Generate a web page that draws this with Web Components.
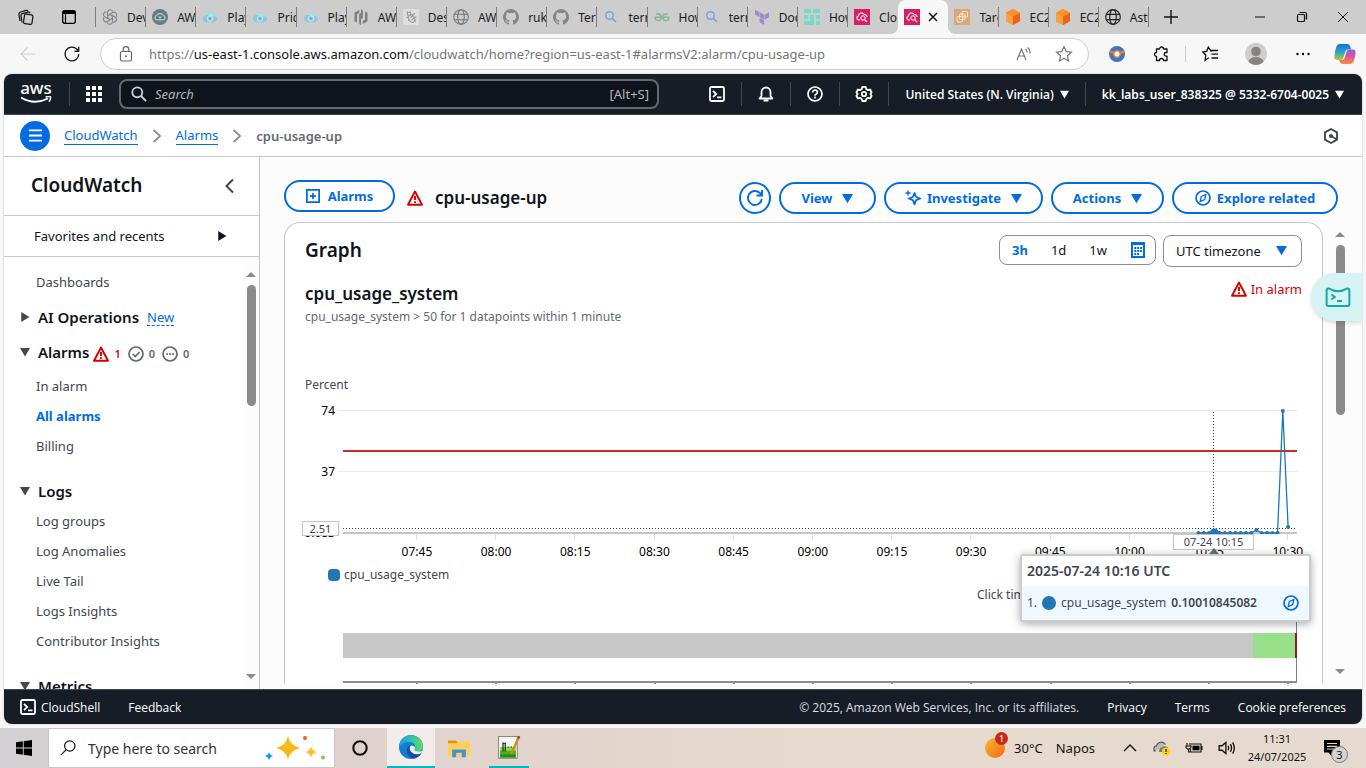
<!DOCTYPE html>
<html lang="en">
<head>
<meta charset="utf-8">
<title>cpu-usage-up | CloudWatch</title>
<style>
html,body{height:100%;margin:0}
body{font-family:"Noto Sans","Open Sans",sans-serif;font-size:13px;color:#0f141a;background:#f7f7f7;overflow:hidden}
</style>
</head>
<body>
<desktop-screen></desktop-screen>
<script>
const ICONS = {
  workspaces:'<g fill="none" stroke="#111" stroke-width="1.2"><rect x="6" y="5.500" width="8.500" height="9.500" rx="1.500" transform="rotate(8 10 10)"/><path d="M4 13.500L3 6.500q-.2-1.500 1.200-1.800l6-1.600q1.300-.3 2 .9M2 12L.9 5.200Q.8 3.700 2 3.300L8 1.400q1.200-.3 2 .7"/></g>',
  tabmenu:'<rect x="1.700" y="1.700" width="12.600" height="12.600" rx="2" fill="none" stroke="#000" stroke-width="1.300"/><path d="M1.500 4V3q0-1.500 1.500-1.500h10q1.500 0 1.500 1.500v2H1.500z"/><path d="M4.500 5v9" stroke="#000" stroke-width="1.200"/>',
  gpt:'<g fill="none" stroke="#858585" stroke-width="1.100"><path id="p" d="M8 5.400L5.500 6.800V3.500a2.700 2.700 0 0 1 5.200-1"/><use href="#p" transform="rotate(60 8 8)"/><use href="#p" transform="rotate(120 8 8)"/><use href="#p" transform="rotate(180 8 8)"/><use href="#p" transform="rotate(240 8 8)"/><use href="#p" transform="rotate(300 8 8)"/></g>',
  darkcloud:'<circle cx="8" cy="8" r="8" fill="#777"/><path d="M4.800 10.800a2.200 2.200 0 0 1 0-4.300 3.600 3.600 0 0 1 6.400 0 2.200 2.200 0 0 1 0 4.300z" fill="#6d6d6d" stroke="#7fd0df" stroke-width="1.500"/><circle cx="8" cy="8.300" r="1.400" fill="#7fd0df"/>',
  cloud:'<path d="M3.700 13.300a3.700 3.700 0 0 1-.4-7.100 5.200 5.200 0 0 1 9.400 0 3.700 3.700 0 0 1-.4 7.100z" fill="#8fc8de"/><path d="M3.300 6.200a5.200 5.200 0 0 1 9.400 0 3.700 3.700 0 0 1 3 2.600q-3-2-6-1.200Q6 5 3.300 6.200z" fill="#a6e0e4"/><circle cx="8" cy="9.500" r="2.700" fill="none" stroke="#d5eef3"/><circle cx="8" cy="9.500" r="1.200" fill="#69a9c4"/>',
  hashi:'<path d="M6.200 1L1.500 3.800v8.400L4 13.600V5.300l2.200-1.300zM6.200 4.900v10.100L8 16V9.400h1.800V6.700H8V3.900zM9.800 15l4.700-2.800V3.800L12 2.400v8.300L9.800 12zM8 .3v6.400h1.800V1.200z" fill="#7e7e7e"/>',
  bug:'<rect width="16" height="16" rx="2" fill="#dedede"/><g fill="none" stroke="#9a9a9a" stroke-width="1.100"><ellipse cx="8.500" cy="9.500" rx="2.800" ry="4" transform="rotate(-30 8.500 9.500)"/><circle cx="6" cy="5" r="1.800"/><path d="M3.500 2.500L5 3.700M7 2v1.500M3.500 8l2.500 1M9 6l3-1.500M11 8.500l2.500-.5M5 11.500l2-.5M11.500 11l1.500 1.500M7.500 8.500l3-2M8.500 11l3-2"/></g>',
  globe:'<g fill="none" stroke="#777" stroke-width="1.100"><circle cx="8" cy="8" r="7.300"/><ellipse cx="8" cy="8" rx="3.300" ry="7.300"/><path d="M1.500 5.300h13M1.500 10.700h13"/></g>',
  globeDark:'<g fill="none" stroke="#222" stroke-width="1.200"><circle cx="8" cy="8" r="7.300"/><ellipse cx="8" cy="8" rx="3.300" ry="7.300"/><path d="M1.500 5.300h13M1.500 10.700h13"/></g>',
  github:'<path fill="#858585" d="M8 0a8 8 0 0 0-2.530 15.590c.4.070.55-.17.55-.38l-.01-1.490c-2.010.37-2.530-.49-2.690-.94-.09-.23-.48-.94-.82-1.130-.28-.15-.68-.52-.01-.53.630-.01 1.080.58 1.230.82.720 1.210 1.870.87 2.330.66.070-.52.280-.87.510-1.070-1.780-.2-3.640-.89-3.640-3.950 0-.87.310-1.590.82-2.150-.08-.2-.36-1.020.08-2.120 0 0 .67-.21 2.200.82a7.600 7.600 0 0 1 4 0c1.530-1.040 2.200-.82 2.200-.82.440 1.100.16 1.920.08 2.120.510.56.82 1.270.82 2.150 0 3.070-1.870 3.750-3.650 3.950.290.250.540.730.540 1.480l-.01 2.200c0 .21.15.46.55.38A8 8 0 0 0 8 0z"/>',
  lens:'<circle cx="6.500" cy="6.500" r="3.800" fill="none" stroke="#6fa8dc" stroke-width="1.500"/><path d="M9.500 9.500L13 13" stroke="#6fa8dc" stroke-width="1.700"/>',
  geeks:'<g fill="none" stroke="#80b890" stroke-width="1.400"><path d="M2 5h2a2.800 2.800 0 0 1 0 6.500Q1.300 11.500 1 8.300h14q-.3 3.200-3 3.200A2.800 2.800 0 0 1 12 5h2"/></g>',
  terraform:'<path d="M5.600 3.300l4.500 2.500v5L5.600 8.300zM1 .7l4.200 2.400v5L1 5.600zM15 3.200v5l-4.500 2.600v-5zM5.600 8.900l4.500 2.500v4.600l-4.500-2.500z" fill="#9d8ccb"/>',
  mint:'<path d="M0 0h7v4H0zM9 0h7v4H9zM0 6h4v4H0zM6 6h4v10H6zM12 6h4v4h-4zM0 12h8v4H0zM12 12h4v4h-4z" fill="#77d9c7"/>',
  cw:'<rect width="16" height="16" fill="#d81e62"/><path d="M6 11H4.700a2.100 2.100 0 0 1-.3-4.100 3.200 3.200 0 0 1 5.900-1.400A2.500 2.500 0 0 1 13 8" fill="none" stroke="#fff" stroke-width="1.100"/><circle cx="9" cy="9" r="2.200" fill="none" stroke="#fff"/><path d="M10.700 10.700L13 13" stroke="#fff" stroke-width="1.200"/>',
  target:'<rect width="16" height="16" fill="#dca878"/><g fill="none" stroke="#f6e6d7"><rect x="3" y="7.500" width="5.500" height="5.500" rx="1"/><rect x="5.500" y="5" width="5.500" height="5.500" rx="1"/><rect x="8" y="2.500" width="5.500" height="5.500" rx="1"/></g>',
  box:'<path d="M8 0l7 3.800v8.400L8 16l-7-3.800V3.800z" fill="#f58220"/><path d="M1 3.800L8 7.500v8.500l-7-3.800z" fill="#f9a13f"/><path d="M8 0l7 3.800-7 3.700-7-3.700z" fill="#fa9126"/><path d="M15 3.800v8.400L8 16V7.500z" fill="#ee6519"/>',
  plus:'<path d="M8 1v14M1 8h14" stroke="#111" stroke-width="1.400"/>',
  close:'<path d="M4 4l8 8M12 4l-8 8" stroke="#111" stroke-width="1.500"/>',
  min:'<path d="M3 8h10" stroke="#111"/>',
  restore:'<g fill="none" stroke="#111" stroke-width="1.200"><rect x="3.500" y="5.500" width="7" height="7" rx="1"/><path d="M5.500 3.500h5.500q1.500 0 1.500 1.500v5.500"/></g>',
  winclose:'<path d="M3 3l10 10M13 3L3 13" stroke="#111"/>',
  back:'<path d="M15.500 8H1M7.500 1.500L1 8l6.500 6.500" fill="none" stroke="#cfcfcf" stroke-width="1.200"/>',
  reload:'<path d="M14.800 8A6.900 6.900 0 1 1 12.900 3.200L14.500 5M14.700.8V5.300h-4.300" fill="none" stroke="#111" stroke-width="1.300"/>',
  lock:'<g fill="none" stroke="#666" stroke-width="1.200"><rect x="2.500" y="5.500" width="11" height="9.500" rx="1.500"/><path d="M5.200 5.500V3.400a2.800 2.800 0 0 1 5.600 0v2.100"/></g><circle cx="8" cy="10.300" r="1" fill="#666"/>',
  read:'<g fill="none" stroke="#777" stroke-width="1.200"><path d="M1 14L5.500 3 10 14M2.700 10h5.700M9.500 3q1.700 1.300 1.500 3.500M11.500 1.500Q14.500 3.500 14 7.500"/></g>',
  star:'<path d="M8 .8l2.200 4.800 5.200.6-3.900 3.500 1 5.200L8 12.300l-4.500 2.600 1-5.200L.6 6.200l5.200-.6z" fill="none" stroke="#777" stroke-width="1.200"/>',
  donut:'<circle cx="8" cy="8" r="8" fill="#3b77bd"/><path d="M0 5q2.500-1 5 .5a3.800 3.800 0 0 1 6 0Q13.500 4 16 5q-.5 2.300-3.800 3A4.200 4.200 0 1 1 3.800 8Q.5 7 0 5z" fill="#e87a3b"/><circle cx="8" cy="8" r="2.500" fill="#fff"/>',
  puzzle:'<path d="M3.500 3h3a2 2 0 0 1 4 0h3.500v3.500H13a1.800 1.800 0 0 0 0 3.600h1V14.500H10.500a2 2 0 0 0-4 0h-3v-4a2 2 0 0 1 0-4z" fill="none" stroke="#111" stroke-width="1.300" stroke-linejoin="round"/>',
  favs:'<path d="M9.500 5.700L6.300 1.200 4.700 5.300.8 6l3 3-.7 5.300 3.700-2.500M9 4.500h7M9.500 8.200H16M9.500 12H16" fill="none" stroke="#111" stroke-width="1.300"/>',
  user:'<circle cx="8" cy="8" r="8" fill="#d0cecc"/><circle cx="8" cy="6.200" r="3.500" fill="#868381"/><path d="M2.500 13.500a5.700 4.500 0 0 1 11 0A8 8 0 0 1 8 16a8 8 0 0 1-5.500-2.500z" fill="#868381"/>',
  dots:'<circle cx="2.500" cy="8" r="1.200"/><circle cx="8" cy="8" r="1.200"/><circle cx="13.500" cy="8" r="1.200"/>',
  copilot:'<defs><linearGradient id="a" x2="0" y2="1"><stop stop-color="#1a6fd6"/><stop offset=".5" stop-color="#2aa6c9"/><stop offset="1" stop-color="#b4c92f"/></linearGradient><linearGradient id="b" x2="0" y2="1"><stop stop-color="#8a5cf0"/><stop offset=".5" stop-color="#e0559a"/><stop offset="1" stop-color="#fb8a3c"/></linearGradient></defs><path d="M4 .8h6q1.300 0 1.800 1.700l.7 2.200H10q-1.200 0-1.600 1.300L6.700 11q-.4 1.300-1.600 1.300H2.400Q0 12.300.3 9.500q.3-3.500 1.400-6.700Q2.400.8 4 .8z" fill="url(#a)"/><path d="M12 15.200H6q-1.300 0-1.800-1.700l-.6-1.200H6q1.200 0 1.600-1.300l1.700-5Q9.700 4.700 11 4.700h2.600q2.400 0 2.100 2.800-.3 3.200-1.400 5.700-.8 2-2.300 2z" fill="url(#b)"/>',
  grid:'<path d="M0 0h4v4H0zM6 0h4v4H6zM12 0h4v4h-4zM0 6h4v4H0zM6 6h4v4H6zM12 6h4v4h-4zM0 12h4v4H0zM6 12h4v4H6zM12 12h4v4h-4z" fill="#fff"/>',
  search:'<circle cx="6.300" cy="6.300" r="5" fill="none" stroke="currentColor" stroke-width="1.800"/><path d="M10 10l5 5" stroke="currentColor" stroke-width="1.800"/>',
  shell:'<g fill="none" stroke="currentColor" stroke-width="1.800"><rect x="1" y="1" width="14" height="14" rx="1.500"/><path d="M4 4.800L7.200 8 4 11.200M8 11.300h4.500"/></g>',
  bell:'<g fill="none" stroke="#fff" stroke-width="1.800" stroke-linejoin="round"><path d="M3.500 10V6a4.500 4.500 0 0 1 9 0v4l2 2.500H1.500z"/><path d="M5.500 14.500h5"/></g>',
  help:'<g fill="none" stroke="#fff" stroke-width="1.700"><circle cx="8" cy="8" r="7"/><path d="M5.600 6.500q0-2.300 2.400-2.300t2.400 2.100q0 1.200-1.200 1.700Q8 8.500 8 9.800"/></g><rect x="7.100" y="10.600" width="1.800" height="1.800" fill="#fff"/>',
  gear:'<g fill="none" stroke="#fff" stroke-width="1.800"><path d="M6.300 1h3.400l.5 2 1.900 1.100 2-.6 1.500 2.700L14.300 8l1.300 1.800-1.500 2.700-2-.6-1.900 1.100-.5 2H6.300l-.5-2-1.900-1.100-2 .6L.4 9.800 1.700 8 .4 6.200l1.500-2.700 2 .6L5.800 3z" stroke-linejoin="round"/><circle cx="8" cy="8" r="2.200"/></g>',
  down:'<path d="M0 1.500h16L8 15z" fill="currentColor"/>',
  right:'<path d="M2 0v16L15 8z" fill="currentColor"/>',
  chev:'<path d="M4 1l7.500 7L4 15" fill="none" stroke="#8c8c94" stroke-width="2"/>',
  chevl:'<path d="M12 1.500L5.500 8l6.500 6.500" fill="none" stroke="#424650" stroke-width="2"/>',
  menu:'<path d="M1 2.500h14M1 8h14M1 13.500h14" stroke="#fff" stroke-width="2"/>',
  hexq:'<path d="M8 1l6 3.400v7.200L8 15l-6-3.400V4.400z" fill="none" stroke="#424650" stroke-width="1.900"/><circle cx="8" cy="8" r="2" fill="#424650"/><path d="M8 8l6 3.500" stroke="#424650" stroke-width="1.500"/>',
  addbox:'<path d="M1 1h14v14H1zM8 4.500v7M4.500 8h7" fill="none" stroke="currentColor" stroke-width="2"/>',
  warn:'<path d="M8 1.500L15 14.800H1z" fill="none" stroke="#d60000" stroke-width="1.900" stroke-linejoin="round"/><path d="M8 6v4M8 11.200v1.800" stroke="#d60000" stroke-width="1.900"/>',
  ok:'<g fill="none" stroke="#656871" stroke-width="1.700"><circle cx="8" cy="8" r="7"/><path d="M4.800 8l2.500 2.500L11.500 6"/></g>',
  pend:'<circle cx="8" cy="8" r="7" fill="none" stroke="#656871" stroke-width="1.700"/><path d="M4.200 7.200h1.700v1.700H4.200zM7.200 7.200h1.700v1.700H7.200zM10.200 7.200h1.700v1.700h-1.700z" fill="#656871"/>',
  refresh:'<path d="M14.800 9A7 7 0 1 1 12.600 2.800L15 5M15 0v5.500H9.500" fill="none" stroke="#006ce0" stroke-width="1.900"/>',
  spark:'<path d="M9.500 3l1.600 4 4.200 1.500-4.200 1.700-1.600 4.100-1.600-4.100-4.200-1.700L7.900 7z" fill="none" stroke="currentColor" stroke-width="1.800" stroke-linejoin="round"/><path d="M3 .5v5M.5 3h5" stroke="currentColor" stroke-width="1.400"/>',
  compass:'<circle cx="8" cy="8" r="7" fill="none" stroke="currentColor" stroke-width="1.700"/><path d="M10.800 4.500L9.700 9.600l-4.500 2 1.100-5.100z" fill="none" stroke="currentColor" stroke-width="1.300"/>',
  cal:'<path d="M1 0h14v16H1zM3 3v11h10V3z" fill="#006ce0" fill-rule="evenodd"/><path d="M4.300 5h2v2h-2zM7.200 5h2v2h-2zM10.100 5h2v2h-2zM4.300 8h2v2h-2zM7.200 8h2v2h-2zM10.100 8h2v2h-2zM4.300 11h2v2h-2zM7.200 11h2v2h-2z" fill="#006ce0"/>',
  aterm:'<path d="M1 12.500V4q0-1.400 1.500-1.200Q8 6 13.500 2.800 15 2.600 15 4v8.500q0 1-1 1H2q-1 0-1-1zM4 6.500L6 8 4 9.500M7.500 10.500h3" fill="none" stroke="#12a8a4" stroke-width="1.200"/>',
  win:'<path d="M0 2.300l6.800-1V7.600H0zM7.700 1.200L16 0v7.600H7.700zM0 8.500h6.800v6.200L0 13.800zM7.700 8.500H16V16l-8.300-1.200z"/>',
  tsearch:'<circle cx="9.800" cy="6" r="5.200" fill="none" stroke="#111" stroke-width="1.200"/><path d="M6 9.800L.8 15.200" stroke="#111" stroke-width="1.200"/>',
  cortana:'<circle cx="8" cy="8" r="6.700" fill="none" stroke="#111" stroke-width="2.100"/>',
  edge:'<defs><linearGradient id="e"><stop stop-color="#1fa0dc"/><stop offset=".6" stop-color="#39c6a0"/><stop offset="1" stop-color="#62dd55"/></linearGradient></defs><circle cx="8" cy="8" r="8" fill="#0f7fd4"/><path d="M.3 6.200A8 8 0 0 1 16 7.500q0 3.300-3.300 3.300-2.600 0-2.400-1.300.9-1.200.2-2.700Q9.500 4.700 6.500 4.700 2.500 4.700.3 8z" fill="url(#e)"/><path d="M7 7.200q-2.500 1.700-1.600 5 1.200 3.600 5 3.400 3-.8 4.500-3.600-2 1-4.300.7Q7.500 12 7 9.500z" fill="#124f9d"/><path d="M8 7q-1.600 1.800-.1 4 2.300 2.600 6.500 1.400l1.300-1.900q-1 .5-3 .4-2.600 0-2.400-1.400.3-.5.4-1.300Q9.700 7 8 7z" fill="#f2eceb"/>',
  folder:'<path d="M0 2.500h5.500L7 4h8.500v4H0z" fill="#d99708"/><path d="M0 4.500h6L7.500 3.300H16V14H0z" fill="#ffd05a"/><path d="M3 14.700V9h10v5.700h-3v-3.200H6v3.200z" fill="#3c94dc"/>',
  notes:'<rect x="1" y="1" width="12.500" height="14.500" fill="#f4f6f4" stroke="#888" stroke-width=".7"/><path d="M2 8h10.500v7H2z" fill="#8fdc3a"/><path d="M2 10.500h10.500V15H2z" fill="#4bb21f"/><path d="M2 13h10.500v2H2z" fill="#2b8c1d"/><path d="M4 5v6M4 5.500h1.500V11M7 8h1M9 8h1" fill="none" stroke="#222" stroke-width=".8"/><path d="M14.500 1.500L9.500 12.500" stroke="#cf8a1c" stroke-width="1.500"/><path d="M14.800.8l-.6 1.400" stroke="#a33" stroke-width="1.600"/>',
  sun:'<defs><linearGradient id="g" x2="1" y2="1"><stop stop-color="#f7b733"/><stop offset="1" stop-color="#f4680f"/></linearGradient></defs><circle cx="8" cy="8" r="8" fill="url(#g)"/>',
  up:'<path d="M2 11l6-6 6 6" fill="none" stroke="#111" stroke-width="1.400"/>',
  onedrive:'<path d="M1.500 11.500a3 3 0 0 1 1-5.700 5 5 0 0 1 9-1.300" fill="#bbb" stroke="#555" stroke-width="1.200"/><path d="M5 12q-.5-4 4-5.500 3-1 5 1v4.500z" fill="#777"/><circle cx="12" cy="11.500" r="4" fill="#ffd500"/><path d="M12 9v3M12 13v1" stroke="#111" stroke-width="1.200"/>',
  battery:'<path d="M5 4h10v8H4.500V9M15 6.500h1v3h-1M1 3v3M4 3v3M0 6h5v1.500L3.500 9h-2L0 7.500zM2.500 9v3h2" fill="none" stroke="#111" stroke-width="1.100"/><path d="M6.500 5.700h7v4.600h-7z"/>',
  sound:'<path d="M1 6h2.500L7 3v10L3.500 10H1zM9 6q1 2 0 4M11 4.500q2 3.500 0 7M13 3q3 5 0 10" fill="none" stroke="#111" stroke-width="1.200"/>',
  notif:'<path d="M0 0h16v12.500h-8.500V16L4.500 12.500H0z"/><path d="M3 3.500h10M3 6.300h10M3 9h7" stroke="#e6d9ce" stroke-width="1.200"/>',
  sparkles:'<path d="M23 1q1.500 9.500 12 12-10.500 2.500-12 12-1.500-9.500-12-12Q21.500 10.500 23 1z" fill="#fbb917"/><path d="M46 11q.8 5 6 6-5.200 1-6 6-.8-5-6-6 5.200-1 6-6z" fill="#fcc021"/><path d="M4 17q.8 3.500 4.500 4-3.700.7-4.500 4.300Q3.200 21.700-.5 21q3.700-.5 4.500-4z" fill="#0f9cf0"/><circle cx="40" cy="3" r="2" fill="#ef5a28"/><circle cx="58" cy="22.500" r="2" fill="#8cc63f"/>'
};

/* Registers one element: styles and markup are cloned into its open shadow root. */
function define(name, css, html, setup){
  const t = document.createElement('template');
  t.innerHTML = `<style>*{box-sizing:border-box}button,input,select{font:inherit;color:inherit}button{cursor:pointer}a{color:inherit;text-decoration:none}${css}</style>${html}`;
  customElements.define(name, class extends HTMLElement{
    constructor(){ super(); this.attachShadow({mode:'open'}); }
    connectedCallback(){
      if (this.shadowRoot.childNodes.length) return;
      this.shadowRoot.append(t.content.cloneNode(true));
      if (setup) setup(this, this.shadowRoot);
    }
  });
}

define('ui-icon', ':host{display:inline-block;width:16px;height:16px;flex:none}svg{display:block;width:100%;height:100%;overflow:visible}', '',
  (el, root) => {
    const holder = document.createElement('template');
    holder.innerHTML = `<svg viewBox="0 0 ${el.getAttribute('box') || '16 16'}" aria-hidden="true">${ICONS[el.getAttribute('name')]}</svg>`;
    root.append(holder.content);
  });

/* ---------- browser chrome ---------- */
const TABS = [['gpt','Dev'],['darkcloud','AWS'],['cloud','Play'],['cloud','Prici'],['cloud','Play'],['hashi','AWS'],['bug','Desi'],['globe','AWS'],['github','ruk'],['github','Terra'],['lens','terra'],['geeks','How'],['lens','terra'],['terraform','Docs'],['mint','How'],['cw','Clou'],['cw',''],['target','Targ'],['box','EC2'],['box','EC2'],['globeDark','Astr']];

define('tab-strip', `
:host{display:flex;align-items:center;height:34px;background:#cdcdcd;flex:none}
.lead{display:flex;align-items:center;width:96px;height:20px;padding-left:18px;gap:27px;border-right:1px solid #7c7c7c;flex:none}
.tabs{display:flex;flex:1;min-width:0}
.win{display:flex;width:217px;flex:none;align-items:center;justify-content:space-between;padding:0 15px 0 14px}
button{background:none;border:0;padding:0;display:flex}
.plus{margin-right:48px}`,
`<div class="lead"><button aria-label="Workspaces"><ui-icon name="workspaces"></ui-icon></button><button aria-label="Tab actions"><ui-icon name="tabmenu"></ui-icon></button></div>
<div class="tabs" role="tablist"></div>
<div class="win"><button class="plus" aria-label="New tab"><ui-icon name="plus"></ui-icon></button><button aria-label="Minimise"><ui-icon name="min"></ui-icon></button><button aria-label="Restore"><ui-icon name="restore"></ui-icon></button><button aria-label="Close"><ui-icon name="winclose"></ui-icon></button></div>`,
(el, root) => {
  root.querySelector('.tabs').innerHTML = TABS.map(([icon, label], i) =>
    `<page-tab icon="${icon}"${i===16?' active':''}${i===15?' last-before':''}>${label}</page-tab>`).join('');
});

define('page-tab', `
:host{display:flex;align-items:center;flex:1 1 0;min-width:0;height:34px;position:relative;font-size:12px;color:#1b1b1b}
button{display:flex;align-items:center;gap:9px;width:100%;padding:0 0 0 6px;height:20px;background:none;border:0;border-right:1px solid #7c7c7c;overflow:hidden;white-space:nowrap}
span{overflow:hidden;flex:1;text-align:left}
:host([active]) button{gap:5px}
:host([last-before]) button,:host([active]) button{border-color:transparent}
:host([active]){background:#f7f7f7;border-radius:8px 8px 0 0}
:host([active])::before,:host([active])::after{content:"";position:absolute;bottom:0;width:8px;height:8px}
:host([active])::before{right:100%;background:radial-gradient(circle at 0 0,transparent 8px,#f7f7f7 8px)}
:host([active])::after{left:100%;background:radial-gradient(circle at 100% 0,transparent 8px,#f7f7f7 8px)}`,
`<button role="tab"></button>`,
(el, root) => {
  root.querySelector('button').innerHTML = `<ui-icon name="${el.getAttribute('icon')}"></ui-icon>` +
    (el.hasAttribute('active') ? '<ui-icon name="close" aria-label="Close tab"></ui-icon>' : '<span><slot></slot></span>');
});

define('address-bar', `
:host{display:flex;align-items:center;height:40px;background:#f7f7f7;padding:0 10px 0 20px;flex:none}
button{background:none;border:0;padding:0;display:flex}
.reload{margin:0 20px 0 28px}
.field{display:flex;align-items:center;flex:1;min-width:0;height:32px;border:1px solid #cfcfcf;border-radius:16px;background:#fff;padding:0 16px 0 17px}
.url{flex:1;min-width:0;margin-left:15px;font-size:13px;color:#767676;white-space:nowrap;overflow:hidden;outline:0}
.url b{font-weight:400;color:#111}
.read{margin-right:24px}
.ext{display:flex;align-items:center;margin-left:20px;gap:28px}
.fav{border-left:1px solid #cfcfcf;padding-left:16px;margin-left:-12px}
.big{width:22px;height:22px}
.fav+button{margin-left:-1px}
.cop{margin-left:-5px}`,
`<button aria-label="Back"><ui-icon name="back"></ui-icon></button>
<button class="reload" aria-label="Refresh"><ui-icon name="reload"></ui-icon></button>
<div class="field"><ui-icon name="lock"></ui-icon>
<div class="url" role="textbox" contenteditable="true" aria-label="Address" spellcheck="false">https://<b>us-east-1.console.aws.amazon.com</b>/cloudwatch/home?region=us-east-1#alarmsV2:alarm/cpu-usage-up</div>
<button class="read" aria-label="Read aloud"><ui-icon name="read"></ui-icon></button><button aria-label="Favourite"><ui-icon name="star"></ui-icon></button></div>
<div class="ext"><button aria-label="Extension"><ui-icon name="donut"></ui-icon></button><button aria-label="Extensions"><ui-icon name="puzzle"></ui-icon></button><button class="fav" aria-label="Favourites"><ui-icon name="favs"></ui-icon></button><button aria-label="Profile"><ui-icon class="big" name="user"></ui-icon></button><button aria-label="More"><ui-icon name="dots"></ui-icon></button><button class="cop" aria-label="Copilot"><ui-icon class="big" name="copilot"></ui-icon></button></div>`);

/* ---------- AWS console ---------- */
define('aws-header', `
:host{display:flex;align-items:center;height:41px;background:#161d26;border-bottom:1px solid #424650;color:#fff;flex:none;padding:0 18px 0 16px;font-size:12px;font-weight:600}
button{background:none;border:0;padding:0;display:flex;align-items:center;gap:6px;white-space:nowrap}
.logo{display:flex;flex-direction:column;align-items:center;width:32px;font-size:17px;line-height:12px;font-weight:500;margin-top:-3px}
.logo svg{width:32px;height:8px;margin-top:2px}
.sep{width:1px;height:24px;background:#424650;flex:none}
.logo+.sep{margin-left:17px}
.apps{margin:0 17px 0 16px}
label{display:flex;align-items:center;flex:0 1 540px;height:30px;border:2px solid #656871;border-radius:8px;background:#0f141a;padding:0 8px 0 10px;color:#b4b4bb;font-weight:400;font-size:13px;min-width:0}
label ui-icon{color:#d0d0d8}
input{flex:1;min-width:0;background:none;border:0;outline:0;padding:0;margin-left:8px;font-style:italic}
input::placeholder{color:#b4b4bb}
.tools{display:flex;align-items:center;gap:16px;margin-left:auto}
.tri{width:9px;height:9px}
.region{font-family:"Open Sans","Noto Sans",sans-serif}`,
`<a class="logo" href="#" aria-label="AWS home">aws<svg viewBox="0 0 32 8"><path d="M1 1.500Q14 9.500 28 2.500" fill="none" stroke="#fff" stroke-width="1.800"/><path d="M25.500 1q3-1 5-.3.3 2.500-1.500 5" fill="none" stroke="#fff" stroke-width="1.500"/></svg></a>
<span class="sep"></span>
<button class="apps" aria-label="Services"><ui-icon name="grid"></ui-icon></button>
<label><ui-icon name="search"></ui-icon><input type="search" placeholder="Search" aria-label="Search"><span>[Alt+S]</span></label>
<div class="tools"><button aria-label="CloudShell"><ui-icon name="shell"></ui-icon></button><span class="sep"></span><button aria-label="Notifications"><ui-icon name="bell"></ui-icon></button><span class="sep"></span><button aria-label="Help"><ui-icon name="help"></ui-icon></button><span class="sep"></span><button aria-label="Settings"><ui-icon name="gear"></ui-icon></button><span class="sep"></span><button class="region">United States (N. Virginia)<ui-icon class="tri" name="down"></ui-icon></button><span class="sep"></span><button>kk_labs_user_838325 @ 5332-6704-0025<ui-icon class="tri" name="down"></ui-icon></button></div>`);

define('bread-crumbs', `
:host{display:flex;align-items:center;height:42px;background:#fff;border-bottom:1px solid #c6c6cd;padding:0 23px 0 16px;flex:none;font-size:13px}
.menu{width:30px;height:30px;border-radius:50%;border:0;background:#006ce0;padding:0;display:grid;place-items:center;margin-right:14px}
.menu ui-icon{width:15px;height:15px}
a{color:#006ce0;border-bottom:1px solid #006ce0;line-height:18px}
nav{display:flex;align-items:center;gap:12px;flex:1}
nav ui-icon{width:14px;height:14px}
b{font-weight:600;color:#656871}
.tip{background:none;border:0;padding:0;display:flex}`,
`<button class="menu" aria-label="Toggle navigation"><ui-icon name="menu"></ui-icon></button>
<nav aria-label="Breadcrumbs"><a href="#">CloudWatch</a><ui-icon name="chev"></ui-icon><a href="#">Alarms</a><ui-icon name="chev"></ui-icon><b>cpu-usage-up</b></nav>
<button class="tip" aria-label="Tips"><ui-icon name="hexq"></ui-icon></button>`);

define('scroll-rail', `
:host{display:flex;flex-direction:column;align-items:center;width:16px;flex:none;padding:6px 0}
i{width:0;height:0;border:5px solid transparent;border-top:0;border-bottom:5px solid #8b8b8b}
i.dn{border-bottom:0;border-top:5px solid #8b8b8b;margin-top:auto}
span{width:9px;border-radius:5px;background:#8b8b8b;margin-top:8px;height:var(--thumb,28%)}`,
`<i></i><span></span><i class="dn"></i>`);

define('nav-item', `:host{display:block}a{display:block;line-height:30px;color:#424650;padding-left:32px}:host([current]) a{color:#006ce0;font-weight:700}`, `<a href="#"><slot></slot></a>`);
define('nav-section', `
:host{display:block;margin-top:15px}
:host([tight]){margin-top:5px}
h3{margin:0;display:flex;align-items:center;height:30px;font-size:15px;font-weight:600;gap:8px;padding-left:16px;white-space:nowrap}
:host([tight]:not([closed])) h3{margin-bottom:4px}
button{background:none;border:0;padding:0;display:flex;color:#424650}
button ui-icon{width:10px;height:10px}
h3 div{display:flex;align-items:center;gap:4px}`,
`<h3><button aria-label="Toggle section"></button><div><slot name="title"></slot></div></h3><slot></slot>`,
(el, root) => { root.querySelector('button').innerHTML = `<ui-icon name="${el.hasAttribute('closed')?'right':'down'}"></ui-icon>`; });

define('side-nav', `
:host{display:flex;flex-direction:column;width:256px;flex:none;background:#fff;border-right:1px solid #c6c6cd;min-height:0}
h2{margin:0;display:flex;align-items:center;justify-content:space-between;height:59px;border-bottom:1px solid #c6c6cd;padding:0 22px 2px 27px;font-size:19px;font-weight:600;flex:none}
h2 button,.fav{background:none;border:0}
h2 button{padding:2px 0 0;display:flex}
.fav{display:flex;align-items:center;justify-content:space-between;height:41px;border-bottom:1px solid #c6c6cd;padding:0 32px 0 30px;color:#0f141a;flex:none}
.fav ui-icon{width:10px;height:10px}
.body{display:flex;flex:1;min-height:0}
.list{flex:1;min-width:0;overflow:hidden;padding-top:10px}
.new{font-size:13px;font-weight:400;color:#006ce0;border-bottom:1px dashed #006ce0;line-height:16px;margin-left:4px}
.cnt{display:flex;align-items:center;gap:5px;font-size:11px;font-weight:600;color:#656871;margin-right:3px;padding-top:3px}
.cnt.red{color:#d60000}
scroll-rail{background:#fcfcfc;padding:15px 0 10px}`,
`<h2>CloudWatch<button aria-label="Close navigation"><ui-icon name="chevl"></ui-icon></button></h2>
<button class="fav">Favorites and recents<ui-icon name="right"></ui-icon></button>
<div class="body"><nav class="list">
<nav-item>Dashboards</nav-item>
<nav-section tight closed><span slot="title">AI Operations</span><a slot="title" class="new" href="#">New</a></nav-section>
<nav-section tight><span slot="title">Alarms</span><span slot="title" class="cnt red"><ui-icon name="warn"></ui-icon>1</span><span slot="title" class="cnt"><ui-icon name="ok"></ui-icon>0</span><span slot="title" class="cnt"><ui-icon name="pend"></ui-icon>0</span>
<nav-item>In alarm</nav-item><nav-item current>All alarms</nav-item><nav-item>Billing</nav-item></nav-section>
<nav-section><span slot="title">Logs</span><nav-item>Log groups</nav-item><nav-item>Log Anomalies</nav-item><nav-item>Live Tail</nav-item><nav-item>Logs Insights</nav-item><nav-item>Contributor Insights</nav-item></nav-section>
<nav-section><span slot="title">Metrics</span></nav-section>
</nav><scroll-rail style="--thumb:121px"></scroll-rail></div>`);

define('pill-button', `
:host{display:inline-flex;flex:none}
button{display:flex;align-items:center;justify-content:center;gap:6px;height:32px;padding:0 12px;border:2px solid #006ce0;border-radius:16px;background:#fff;color:#006ce0;font-weight:700;font-size:13px;white-space:nowrap;min-width:var(--w,32px)}
:host([round]) button{width:32px;padding:0}`,
`<button><slot></slot></button>`);

define('metric-chart', `
:host{display:grid;grid-template-columns:38px minmax(0,1fr);padding-right:5px;margin-top:52px;font-size:12px;line-height:16px}
.unit{grid-column:1/-1;color:#424650;margin-bottom:10px}
.y{display:flex;flex-direction:column;justify-content:space-between;text-align:right;padding-right:8px;height:138px;color:#000}
.y span{white-space:nowrap;align-self:flex-end}
.plot{position:relative;height:138px}
svg{display:block;width:100%;height:100%;overflow:visible}
.x{grid-column:2;display:grid;grid-template-columns:3.600% repeat(12,8.300%);margin-top:3px;text-align:center;color:#000}
.x span:first-child{grid-column:2}
.legend{grid-column:1/-1;display:flex;align-items:center;gap:4px;padding-left:23px;margin-top:7px;color:#424650}
.legend i{width:12px;height:12px;border-radius:4px;background:#1f77b4}
.hint{grid-column:1/-1;justify-self:end;width:320px;white-space:nowrap;color:#424650;margin-top:4px}
.time{grid-column:2;height:63px;margin-top:18px}
.mark{position:absolute;background:#fff;border:1px solid #c6c6c6;color:#424650;text-align:center;line-height:14px;font-size:11px}
.ym{left:-41px;top:118px;width:37px;height:15px}
.xm{left:87%;top:131px;width:81px;height:16px}
.tip{position:absolute;top:151px;right:-14px;width:291px;background:#fff;border:2px solid #ccc;border-radius:3px;box-shadow:0 2px 8px #0005;color:#424650}
.tip::before{content:"";position:absolute;left:187px;top:-8px;border:5px solid transparent;border-top:0;border-bottom:6px solid #666}
.tip h4{margin:0;padding:0 5px;line-height:30px;font-size:14px;font-weight:600}
.tip p{margin:0;padding:0 10px 0 5px;display:flex;align-items:center;height:34px;gap:5px;background:#f0f8ff}
.tip p i{width:14px;height:14px;border-radius:50%;background:#1f77b4}
.tip p b{font-weight:600}
.tip a{margin-left:auto;color:#006ce0;display:flex}`,
`<div class="unit">Percent</div>
<div class="y"><span>74</span><span>37</span><span>0.083</span></div>
<div class="plot"><svg viewBox="0 0 954 138" preserveAspectRatio="none"></svg>
<span class="mark ym">2.51</span><span class="mark xm">07-24 10:15</span>
<div class="tip" role="tooltip"><h4>2025-07-24 10:16 UTC</h4><p><span>1.</span><i></i><span>cpu_usage_system</span><b>0.10010845082</b><a href="#" aria-label="Explore"><ui-icon name="compass"></ui-icon></a></p></div></div>
<div class="x"></div>
<div class="legend"><i></i>cpu_usage_system</div>
<div class="hint">Click timeline to see the state at that time.</div>
<div class="time"><svg viewBox="0 0 954 63" preserveAspectRatio="none"></svg></div>`,
(el, root) => {
  const ticks = Array.from({length:12}, (_, i) => 74 + Math.round(i * 79.2));
  root.querySelector('.x').innerHTML = ticks.map((_, i) => {
    const m = 465 + i * 15;
    return `<span>${String(Math.floor(m / 60)).padStart(2, '0')}:${String(m % 60).padStart(2, '0')}</span>`;
  }).join('');
  const pts = Array.from({length:18}, (_, i) => [855.5 + i * 5.27, i === 16 ? 8 : i === 17 ? 124 : i === 11 ? 127 : 130]);
  root.querySelector('.plot svg').innerHTML =
    `<g fill="none"><path d="M-5 7.500H954M-5 68.500H954M-5 130H0" stroke="#e9ebed"/><path d="${ticks.map(x => `M${x - .5} 131v6`).join('')}" stroke="#ddd"/>
     <path d="M0 130H954" stroke="#c6c6c6" stroke-width="2"/><path d="M0 48H954" stroke="#d62728" stroke-width="2"/>
     <path d="M0 125.500H954M870.500 9V130" stroke="#444" stroke-dasharray="1 2"/></g>
     <clipPath id="c"><path d="M0 0H954V131H0z"/></clipPath>
     <g clip-path="url(#c)" fill="#1f77b4"><path d="M${pts.map(p => p.join(' ')).join('L')}" fill="none" stroke="#1f77b4" stroke-width="1.300"/>
     ${pts.map(([x, y], i) => `<circle cx="${x}" cy="${y}" r="${i === 3 ? 4.5 : 2}"/>`).join('')}</g>`;
  root.querySelector('.time svg').innerHTML =
    `<path d="M0 12H910V37H0z" fill="#c7c7c7"/><path d="M910 12H952V37H910z" fill="#98df8a"/>
     <path d="M953.500 0V61" stroke="#7c7c86"/><path d="M952 12h2V37h-2z" fill="#8c1d24"/><path d="M0 61H954" stroke="#8c8c94" stroke-width="2"/>
     <path d="${ticks.map(x => `M${x} 62v1`).join('')}" stroke="#8c8c94" stroke-width="2"/>`;
});

define('alarm-card', `
:host{display:block;flex:1;min-width:0;background:#fff;border:1px solid #c6c6cd;border-bottom:0;border-radius:16px 16px 0 0;padding:12px 20px 0;overflow:hidden}
.top{display:flex;align-items:center;height:32px;gap:7px}
h2{margin:0;font-size:19px;font-weight:600;flex:1;line-height:30px;align-self:start}
.seg{display:flex;align-items:center;height:30px;border:1px solid #8c8c94;border-radius:8px;padding:0 9px 0 12px;gap:23px;margin-bottom:2px}
.seg button{background:none;border:0;padding:0;display:flex}
.seg .on{color:#006ce0;font-weight:700}
.tz{position:relative;display:flex;color:#006ce0}
.tz ui-icon{position:absolute;right:15px;top:10px;width:11px;height:11px;pointer-events:none}
select{appearance:none;width:139px;height:32px;border:1px solid #8c8c94;border-radius:8px;background:#fff;padding:0 12px;color:#0f141a}
.info{display:flex;justify-content:space-between}
h3{margin:17px 0 5px;font-size:17px;line-height:20px;font-weight:600}
p{margin:0;font-size:12px;line-height:16px;color:#656871}
.state{display:flex;align-items:center;gap:4px;height:20px;margin-top:12px;color:#d60000}`,
`<div class="top"><h2>Graph</h2><div class="seg" role="group" aria-label="Time range"><button class="on">3h</button><button>1d</button><button>1w</button><button aria-label="Custom range"><ui-icon name="cal"></ui-icon></button></div>
<div class="tz"><select aria-label="Timezone"><option>UTC timezone</option></select><ui-icon name="down"></ui-icon></div></div>
<div class="info"><div><h3>cpu_usage_system</h3><p>cpu_usage_system &gt; 50 for 1 datapoints within 1 minute</p></div><div class="state"><ui-icon name="warn"></ui-icon>In alarm</div></div>
<metric-chart></metric-chart>`);

define('alarm-page', `
:host{display:flex;flex-direction:column;flex:1;min-width:0;min-height:0;background:#fcfcfd;position:relative;padding:23px 0 5px}
.bar{display:flex;align-items:center;justify-content:space-between;height:36px;padding:0 24px;margin-bottom:6px;flex:none}
.left,.right{display:flex;align-items:center}
.left{padding-bottom:4px}
.right{gap:8px}
.add{width:14px;height:14px;margin-right:2px}
.left ui-icon.w{margin:4px 12px 0 12px}
h1{margin:4px 0 0;font-size:17px;line-height:24px;font-weight:600}
.tri{width:11px;height:11px;margin-left:4px}
.view{display:flex;flex:1;min-height:0;padding:0 14px 0 24px;gap:9px}
.term{position:absolute;right:0;top:116px;width:51px;height:48px;border:0;border-radius:24px 0 0 24px;background:#d5f3f2;padding:0 0 0 2px;display:grid;place-items:center;box-shadow:0 2px 4px #0002}
.term ui-icon{width:26px;height:26px}
scroll-rail{padding:10px 0}`,
`<div class="bar"><div class="left"><pill-button style="--w:111px"><ui-icon class="add" name="addbox"></ui-icon>Alarms</pill-button><ui-icon class="w" name="warn"></ui-icon><h1>cpu-usage-up</h1></div>
<div class="right"><pill-button round><ui-icon name="refresh"></ui-icon></pill-button><pill-button style="--w:97px">View<ui-icon class="tri" name="down"></ui-icon></pill-button><pill-button style="--w:159px"><ui-icon name="spark"></ui-icon>Investigate<ui-icon class="tri" name="down"></ui-icon></pill-button><pill-button style="--w:113px">Actions<ui-icon class="tri" name="down"></ui-icon></pill-button><pill-button style="--w:166px"><ui-icon name="compass"></ui-icon>Explore related</pill-button></div></div>
<div class="view"><alarm-card></alarm-card><scroll-rail style="--thumb:170px"></scroll-rail></div>
<button class="term" aria-label="Open terminal"><ui-icon name="aterm"></ui-icon></button>`);

define('aws-footer', `
:host{display:flex;align-items:center;height:35px;flex:none;background:#161d26;border-top:1px solid #424650;color:#fff;font-family:"Open Sans","Noto Sans",sans-serif;font-size:12px;padding:0 16px;gap:28px;font-weight:500}
button{background:none;border:0;padding:0;display:flex;align-items:center;gap:5px}
.copy{margin-left:auto;color:#dedee3;font-weight:400}`,
`<button><ui-icon name="shell"></ui-icon>CloudShell</button><a href="#">Feedback</a><span class="copy">© 2025, Amazon Web Services, Inc. or its affiliates.</span><a href="#">Privacy</a><a href="#">Terms</a><a href="#">Cookie preferences</a>`);

define('aws-console', `
:host{display:flex;flex-direction:column;flex:1;min-height:0;margin:0 4px 4px;border-radius:8px;overflow:hidden;box-shadow:0 0 2px #0004}
.main{display:flex;flex:1;min-height:0}`,
`<aws-header></aws-header><bread-crumbs></bread-crumbs><div class="main"><side-nav></side-nav><alarm-page></alarm-page></div><aws-footer></aws-footer>`);

/* ---------- Windows taskbar ---------- */
define('task-bar', `
:host{display:flex;align-items:center;height:40px;flex:none;background:linear-gradient(90deg,#d4d1d4,#e0d2cd 27%,#e6d9cd 60%,#e6d9cf);font-size:14px;color:#111}
button{background:none;border:0;padding:0;height:40px;display:flex;align-items:center;justify-content:center;flex:none}
.start{width:48px}
label{display:flex;align-items:center;width:287px;height:40px;background:#fff;border:1px solid #c9c5c7;padding:0 8px 0 11px;flex:none}
input{flex:1;min-width:0;border:0;outline:0;background:none;padding:0;margin-left:12px}
input::placeholder{color:#333}
.sp{width:62px;height:26px}
.cor{width:50px;margin-right:2px}
.app{width:48px}
.folder{width:22px;height:22px}
.edge{background:#f2eceb;border-bottom:2px solid #00b7c3}
.note{width:40px;border-bottom:2px solid #00b7c3;margin-left:6px}
.m{width:24px;height:24px}
.tray{margin-left:auto;display:flex;align-items:center;height:40px}
.tray>.weather{gap:9px;margin-right:11px;padding:0 8px 0 0;font-size:13px}
.weather .c{margin-right:4px}
.sun{position:relative;width:21px;height:21px}
.sun ui-icon{width:20px;height:20px}
.sun b{position:absolute;right:-3px;top:-6px;width:13px;height:13px;border-radius:50%;background:#c42b1c;color:#fff;font-size:9px;line-height:13px;font-weight:400}
.tray>button{padding:0 8px}
.snd{width:18px;height:18px}
.clock{flex-direction:column;font-size:11px;line-height:18px;width:66px}
.tray>.clock{padding:0}
.tray>.n{position:relative;margin-left:7px;padding:0 26px 0 7px}
.n b{position:absolute;left:14px;top:18px;width:17px;height:17px;border-radius:50%;background:#d6d3d0;border:1px solid #777;font-size:11px;line-height:15px;font-weight:400}`,
`<button class="start" aria-label="Start"><ui-icon name="win"></ui-icon></button>
<label><ui-icon name="tsearch"></ui-icon><input type="text" placeholder="Type here to search" aria-label="Type here to search"><ui-icon class="sp" name="sparkles" box="60 26"></ui-icon></label>
<button class="cor" aria-label="Cortana"><ui-icon name="cortana"></ui-icon></button>
<button class="app edge" aria-label="Microsoft Edge"><ui-icon class="m" name="edge"></ui-icon></button>
<button class="app" aria-label="File Explorer"><ui-icon class="folder" name="folder"></ui-icon></button>
<button class="app note" aria-label="Notepad++"><ui-icon class="m" name="notes"></ui-icon></button>
<div class="tray"><button class="weather"><span class="sun"><ui-icon name="sun"></ui-icon><b>1</b></span><span class="c">30°C</span><span>Napos</span></button>
<button aria-label="Hidden icons"><ui-icon name="up"></ui-icon></button><button aria-label="OneDrive"><ui-icon name="onedrive"></ui-icon></button><button aria-label="Battery"><ui-icon name="battery"></ui-icon></button><button aria-label="Volume"><ui-icon class="snd" name="sound"></ui-icon></button>
<button class="clock"><span>11:31</span><span>24/07/2025</span></button><button class="n" aria-label="Notifications"><ui-icon name="notif"></ui-icon><b>3</b></button></div>`);

define('desktop-screen', `:host{display:flex;flex-direction:column;height:100vh}`, `<tab-strip></tab-strip><address-bar></address-bar><aws-console></aws-console><task-bar></task-bar>`);
</script>
</body>
</html>
